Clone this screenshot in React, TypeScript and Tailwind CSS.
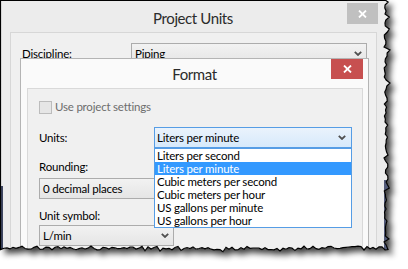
import React from 'react';

// seeded random so the torn edge is the same every render
function makeRand(seed: number) {
  let s = seed;
  return () => {
    s = (s * 16807) % 2147483647;
    return s / 2147483647;
  };
}

function tornPoints(): [number, number][] {
  const r = makeRand(42);
  const pts: [number, number][] = [[0, 0], [385, 0]];
  for (let y = 2; y < 246; y += 3) {
    const spike = r() < 0.15 ? 2 : 0;
    pts.push([384 + r() * 4 + spike, y]);
  }
  for (let x = 388; x > 0; x -= 3) {
    const spike = r() < 0.15 ? 2 : 0;
    pts.push([x, 246 + r() * 4 + spike]);
  }
  pts.push([0, 250]);
  return pts;
}

const PTS = tornPoints();
const CLIP = `polygon(${PTS.map(([x, y]) => `${x}px ${y}px`).join(', ')})`;
const SHADOW = 'M' + PTS.map(([x, y]) => `${x + 5},${y + 5}`).join(' L') + ' Z';
const EDGE =
  'M0.5,250 L0.5,0.5 ' +
  PTS.slice(1)
    .map(([x, y]) => `L${x},${y}`)
    .join(' ');

function Chevron() {
  return (
    <svg width="8" height="5" viewBox="0 0 8 5" className="shrink-0">
      <polyline points="0.8,0.8 4,4 7.2,0.8" fill="none" stroke="#505050" strokeWidth="1.8" />
    </svg>
  );
}

function CloseX() {
  return (
    <svg width="9" height="8" viewBox="0 0 9 8">
      <path d="M1,0.5 L8,7.5 M8,0.5 L1,7.5" stroke="#fff" strokeWidth="1.8" />
    </svg>
  );
}

function Cursor() {
  return (
    <svg width="13" height="20" viewBox="0 0 13 20" className="absolute left-[313px] top-[169px]">
      <path
        d="M0.5,0.5 L0.5,16.5 L4.5,12.5 L7.2,18.8 L9.6,17.8 L7,11.5 L12,11.5 Z"
        fill="#fff"
        stroke="#000"
        strokeWidth="1"
        strokeLinejoin="miter"
      />
    </svg>
  );
}

function ProjectUnits() {
  return (
    <div className="absolute left-0 top-0 h-[262px] w-[392px] border-l border-t border-black bg-[#ececec]">
      <div className="flex h-[31px]">
        <div className="w-[38px]" />
        <div className="flex-1 pt-[2px] text-center text-[15px] leading-[31px] tracking-[-0.4px] text-[#2b2b2b]">
          Project Units
        </div>
        <div className="mr-[14px] mt-[2px] flex h-[21px] w-[31px] items-center justify-center bg-[#c0c0c0]">
          <CloseX />
        </div>
      </div>
      <div className="ml-[9px] h-[230px] w-[367px] border border-[#d7d7d7] bg-[#f0f0f0] pl-[11px] pt-[10px]">
        <div className="flex items-center">
          <span className="w-[109px] leading-[16px]">Discipline:</span>
          <div className="flex h-[21px] w-[236px] items-center justify-between border border-[#acacac] bg-linear-to-b from-[#f2f2f2] to-[#e5e5e5] pl-[3px] pr-[4px]">
            <span>Piping</span>
            <Chevron />
          </div>
        </div>
      </div>
    </div>
  );
}

const UNITS = [
  'Liters per second',
  'Liters per minute',
  'Cubic meters per second',
  'Cubic meters per hour',
  'US gallons per minute',
  'US gallons per hour',
];

function Format() {
  return (
    <div className="absolute left-[20px] top-[58px] h-[210px] w-[349px] border border-[#b4b4b4] bg-[#fafafa]">
      <div className="flex h-[29px]">
        <div className="w-[37px]" />
        <div className="flex-1 pt-[1px] text-center text-[15px] leading-[29px] tracking-[-0.4px] text-[#2b2b2b]">
          Format
        </div>
        <div className="mr-[5px] flex h-[20px] w-[32px] items-center justify-center bg-[#c75050]">
          <CloseX />
        </div>
      </div>
      <div className="ml-[6px] h-[180px] w-[336px] border border-[#d9d9d9] bg-[#f0f0f0] pl-[11px] pt-[10px]">
        <div className="flex items-center gap-[3px]">
          <div className="h-[13px] w-[13px] border border-[#bcbcbc] bg-[#e6e6e6]" />
          <span className="leading-[16px] text-[#6d6d6d]">Use project settings</span>
        </div>

        <div className="mt-[12px] flex items-center">
          <span className="w-[115px] leading-[16px]">Units:</span>
          <div className="relative h-[21px] w-[198px]">
            <div className="flex h-full items-center justify-between border border-[#569de5] bg-linear-to-b from-[#eaf3fc] to-[#d6e9fb] pl-[2px] pr-[5px]">
              <span>Liters per minute</span>
              <Chevron />
            </div>
            <div className="absolute left-0 top-full z-10 w-[198px] border border-[#569de5] bg-white">
              {UNITS.map((u, i) => (
                <div
                  key={u}
                  className={
                    i === 1
                      ? 'h-[13px] bg-[#3399ff] pl-[2px] leading-[13px] text-white'
                      : 'h-[13px] pl-[2px] leading-[13px]'
                  }
                >
                  {u}
                </div>
              ))}
            </div>
          </div>
        </div>

        <div className="mt-[11px] leading-[16px]">Rounding:</div>
        <div className="mt-[3px] flex h-[21px] w-[200px] items-center border border-[#acacac] bg-linear-to-b from-[#f2f2f2] to-[#e5e5e5] pl-[3px]">
          0 decimal places
        </div>

        <div className="mt-[9px] leading-[16px]">Unit symbol:</div>
        <div className="mt-[1px] flex h-[21px] w-[135px] items-center justify-between border border-[#acacac] bg-linear-to-b from-[#f2f2f2] to-[#e5e5e5] pl-[3px] pr-[4px]">
          <span>L/min</span>
          <Chevron />
        </div>
      </div>
    </div>
  );
}

export default function App() {
  return (
    <div className="relative h-[269px] w-[408px] overflow-hidden bg-white font-['Lato',sans-serif] text-[11.5px] tracking-[-0.2px] text-black">
      <svg width="408" height="269" className="absolute left-0 top-0">
        <defs>
          <filter id="shadowBlur" x="-10%" y="-10%" width="120%" height="120%">
            <feGaussianBlur stdDeviation="3" />
          </filter>
        </defs>
        <path d={SHADOW} fill="#000" opacity="0.75" filter="url(#shadowBlur)" />
      </svg>

      <div className="absolute inset-0 bg-[#f4f4f4]" style={{ clipPath: CLIP }}>
        <ProjectUnits />
        <Format />
        {/* desktop showing behind the dialog */}
        <div className="absolute left-[384px] top-[180px] h-[75px] w-[12px] bg-[#525a78]" />
        <div className="absolute left-[1px] top-[186px] h-[64px] w-[2px] bg-[#3d4560]" />
        <Cursor />
      </div>

      <svg width="408" height="269" className="pointer-events-none absolute left-0 top-0">
        <path d={EDGE} fill="none" stroke="#000" strokeWidth="1.2" />
      </svg>
    </div>
  );
}
